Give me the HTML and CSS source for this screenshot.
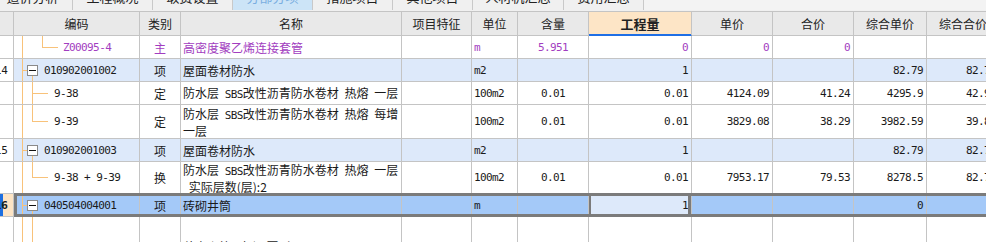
FILE: index.html
```html
<!DOCTYPE html>
<html lang="zh-CN">
<head>
    <meta charset="UTF-8">
    <meta name="viewport" content="width=device-width, initial-scale=1.0">
    <title>分部分项</title>
    <link rel="stylesheet" href="styles.css">
</head>
<body>
    <div class="tabs">
        <div class="tab first">造价分析</div>
        <div class="tab">工程概况</div>
        <div class="tab">取费设置</div>
        <div class="tab active">分部分项</div>
        <div class="tab">措施项目</div>
        <div class="tab">其他项目</div>
        <div class="tab wide">人材机汇总</div>
        <div class="tab">费用汇总</div>
    </div>

    <div class="sheet">
        <div class="row head">
            <div class="c rn"></div>
            <div class="c ctr">编码</div>
            <div class="c ctr">类别</div>
            <div class="c ctr">名称</div>
            <div class="c ctr">项目特征</div>
            <div class="c ctr">单位</div>
            <div class="c ctr">含量</div>
            <div class="c ctr qty">工程量</div>
            <div class="c ctr">单价</div>
            <div class="c ctr">合价</div>
            <div class="c ctr">综合单价</div>
            <div class="c ctr">综合合价</div>
            <div class="c"></div>
        </div>

        <!-- 主材 -->
        <div class="row sub">
            <div class="c rn n"></div>
            <div class="c tree t-deep n">Z00095-4</div>
            <div class="c ctr">主</div>
            <div class="c nm">高密度聚乙烯连接套管</div>
            <div class="c"></div>
            <div class="c n">m</div>
            <div class="c ctr n">5.951</div>
            <div class="c r n">0</div>
            <div class="c r n">0</div>
            <div class="c r n">0</div>
            <div class="c"></div>
            <div class="c"></div>
            <div class="c"></div>
        </div>

        <div class="row grp">
            <div class="c rn n"><span>14</span></div>
            <div class="c tree t-node n"><span class="box"></span>010902001002</div>
            <div class="c ctr">项</div>
            <div class="c nm">屋面卷材防水</div>
            <div class="c"></div>
            <div class="c n">m2</div>
            <div class="c"></div>
            <div class="c r n">1</div>
            <div class="c"></div>
            <div class="c"></div>
            <div class="c r n">82.79</div>
            <div class="c r n">82.79</div>
            <div class="c"></div>
        </div>

        <div class="row">
            <div class="c rn n"></div>
            <div class="c tree t-leaf n">9-38</div>
            <div class="c ctr">定</div>
            <div class="c nm"><span>防水层 <span class="lat">SBS</span>改性沥青防水卷材 热熔 一层</span></div>
            <div class="c"></div>
            <div class="c n">100m2</div>
            <div class="c ctr n">0.01</div>
            <div class="c r n">0.01</div>
            <div class="c r n">4124.09</div>
            <div class="c r n">41.24</div>
            <div class="c r n">4295.9</div>
            <div class="c r n">42.96</div>
            <div class="c"></div>
        </div>

        <div class="row tall">
            <div class="c rn n"></div>
            <div class="c tree t-last n">9-39</div>
            <div class="c ctr">定</div>
            <div class="c nm"><span>防水层 <span class="lat">SBS</span>改性沥青防水卷材 热熔 每增一层</span></div>
            <div class="c"></div>
            <div class="c n">100m2</div>
            <div class="c ctr n">0.01</div>
            <div class="c r n">0.01</div>
            <div class="c r n">3829.08</div>
            <div class="c r n">38.29</div>
            <div class="c r n">3982.59</div>
            <div class="c r n">39.83</div>
            <div class="c"></div>
        </div>

        <div class="row grp">
            <div class="c rn n"><span>15</span></div>
            <div class="c tree t-node n"><span class="box"></span>010902001003</div>
            <div class="c ctr">项</div>
            <div class="c nm">屋面卷材防水</div>
            <div class="c"></div>
            <div class="c n">m2</div>
            <div class="c"></div>
            <div class="c r n">1</div>
            <div class="c"></div>
            <div class="c"></div>
            <div class="c r n">82.79</div>
            <div class="c r n">82.79</div>
            <div class="c"></div>
        </div>

        <div class="row tall2">
            <div class="c rn n"></div>
            <div class="c tree t-last n">9-38 + 9-39</div>
            <div class="c ctr">换</div>
            <div class="c nm"><span>防水层 <span class="lat">SBS</span>改性沥青防水卷材 热熔 一层<br>&nbsp;实际层数(层):2</span></div>
            <div class="c"></div>
            <div class="c n">100m2</div>
            <div class="c ctr n">0.01</div>
            <div class="c r n">0.01</div>
            <div class="c r n">7953.17</div>
            <div class="c r n">79.53</div>
            <div class="c r n">8278.5</div>
            <div class="c r n">82.79</div>
            <div class="c"></div>
        </div>

        <div class="row sel">
            <div class="c rn n"><span>16</span></div>
            <div class="c tree t-node n"><span class="box"></span>040504004001</div>
            <div class="c ctr">项</div>
            <div class="c nm">砖砌井筒</div>
            <div class="c"></div>
            <div class="c n">m</div>
            <div class="c"></div>
            <div class="c r n cur">1</div>
            <div class="c"></div>
            <div class="c"></div>
            <div class="c r n">0</div>
            <div class="c"></div>
            <div class="c"></div>
        </div>

        <div class="row low">
            <div class="c rn n"></div>
            <div class="c tree t-pass n"></div>
            <div class="c ctr">借</div>
            <div class="c nm">井室砌筑 砖砌 圆形</div>
            <div class="c"></div>
            <div class="c"></div>
            <div class="c"></div>
            <div class="c"></div>
            <div class="c"></div>
            <div class="c"></div>
            <div class="c"></div>
            <div class="c"></div>
            <div class="c"></div>
        </div>
    </div>
</body>
</html>
```

FILE: styles.css
```css
body {
    margin: 0;
    width: 986px;
    height: 242px;
    overflow: hidden;
    background: #f0f0f0;
    font-family: "Noto Sans CJK SC", sans-serif;
    font-size: 12px;
    color: #1a1a1a;
}

/* tab strip, mostly scrolled out of view */
.tabs {
    display: flex;
    align-items: flex-end;
    height: 10px;
    overflow: hidden;
    margin-bottom: 1px;
    background: #f3f3f3;
}
.tab {
    flex: 0 0 80px;
    box-sizing: border-box;
    height: 24px;
    padding-top: 4px;
    line-height: 14px;
    font-size: 13px;
    text-align: center;
    color: #222;
    background: #f0f0f0;
    border-right: 1px solid #c9c9c9;
}
.tab.first {
    margin-left: -7px;
}
.tab.wide {
    flex-basis: 91px;
}
.tab.active {
    background: #cce4f7;
    color: #7aaee0;
}

/* grid */
.sheet {
    width: 1080px;
    background: #fff;
    border-top: 1px solid #c4c4c4;
}
.row {
    position: relative;
    display: grid;
    grid-template-columns: 14px 126px 41px 221px 70px 46px 71px 103px 81px 81px 73px 73px 80px;
    height: 23px;
}
.row.tall {
    height: 34px;
}
.row.tall2 {
    height: 32px;
}
.row.low {
    height: 40px;
}
.c {
    box-sizing: border-box;
    display: flex;
    align-items: center;
    padding: 0 2px;
    overflow: hidden;
    white-space: nowrap;
    border-right: 1px solid #c4c4c4;
    border-bottom: 1px solid #c4c4c4;
}
.ctr {
    justify-content: center;
}
.r {
    justify-content: flex-end;
    padding-right: 3px;
}
.n {
    font-family: "DejaVu Sans Mono", monospace;
    font-size: 11px;
    letter-spacing: -0.6px;
}
.nm {
    white-space: normal;
    line-height: 15px;
    word-spacing: 3px;
}
.lat {
    font-family: "DejaVu Sans Mono", monospace;
    font-size: 11px;
    letter-spacing: -0.6px;
    word-spacing: 0;
}

/* header */
.head {
    height: 24px;
    background: #e9e9e9;
    color: #222;
}
.head .qty {
    background: #fde5c6;
    font-size: 13px;
    font-weight: bold;
    border-bottom-color: #1f6fe5;
    box-shadow: inset 0 -1px #1f6fe5;
}

/* row number column */
.rn {
    justify-content: flex-end;
    padding: 0 5px 0 0;
    letter-spacing: 0;
    background: #fff;
}
.head .rn {
    background: #e9e9e9;
}

/* row states */
.sub {
    color: #a23dc0;
}
.grp {
    background: #dde9fa;
}
.sel {
    background: #a4c9f8;
}
.sel .rn {
    background: #fde4c4;
    box-shadow: inset 3px 0 #1e6fe0;
    font-weight: bold;
}
.sel::after {
    content: "";
    position: absolute;
    left: 14px;
    right: 0;
    top: -1px;
    bottom: 0;
    border: 3px solid #7b7b7b;
    border-right: none;
    pointer-events: none;
}
.cur {
    position: relative;
    background: #dde9fa;
}
.cur::after {
    content: "";
    position: absolute;
    left: -1px;
    right: 0;
    top: -1px;
    bottom: 0;
    border-left: 3px solid #7b7b7b;
    border-right: 3px solid #7b7b7b;
}
.low .c {
    align-items: flex-start;
    padding-top: 22px;
}

/* tree lines in the code column */
.tree {
    --ln: linear-gradient(#f8c27a, #f8c27a);
    background-repeat: no-repeat;
}
.t-deep {
    padding-left: 49px;
    background-image: var(--ln), var(--ln), var(--ln);
    background-size: 1px 100%, 1px 50%, 16px 1px;
    background-position: 8px 0, 28px 0, 28px 50%;
}
.t-node {
    padding-left: 13px;
    background-image: var(--ln), var(--ln), var(--ln);
    background-size: 1px 100%, 5px 1px, 1px 50%;
    background-position: 8px 0, 8px 50%, 18px 100%;
}
.t-leaf {
    padding-left: 40px;
    background-image: var(--ln), var(--ln), var(--ln);
    background-size: 1px 100%, 1px 100%, 16px 1px;
    background-position: 8px 0, 18px 0, 18px 50%;
}
.t-last {
    padding-left: 40px;
    background-image: var(--ln), var(--ln), var(--ln);
    background-size: 1px 100%, 1px 50%, 16px 1px;
    background-position: 8px 0, 18px 0, 18px 50%;
}
.t-pass {
    background-image: var(--ln), var(--ln);
    background-size: 1px 100%, 1px 100%;
    background-position: 8px 0, 18px 0;
}
.box {
    flex: none;
    display: flex;
    align-items: center;
    justify-content: center;
    box-sizing: border-box;
    width: 11px;
    height: 11px;
    margin-right: 6px;
    border: 1px solid #8a8a8a;
    background: #fff;
}
.box::before {
    content: "";
    width: 7px;
    height: 1px;
    background: #111;
}
```
